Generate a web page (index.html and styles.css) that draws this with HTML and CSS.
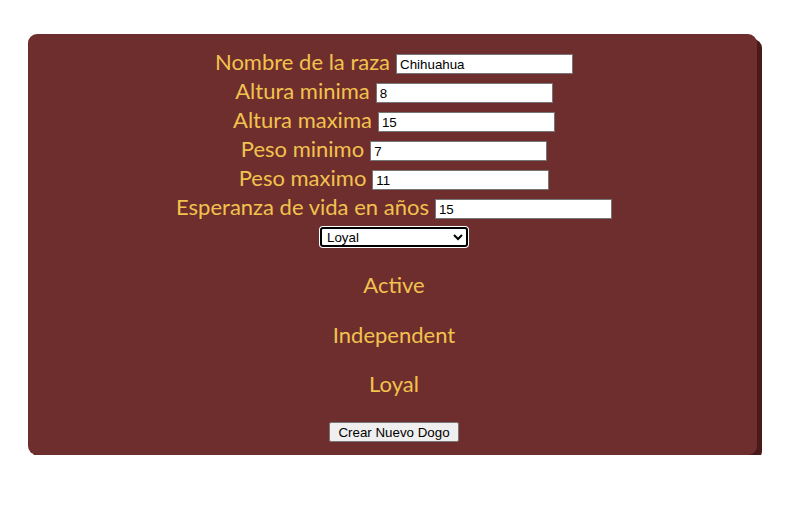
FILE: index.html
```html
<!DOCTYPE html>
<html lang="es">
<head>
<meta charset="utf-8">
<title>Crear Dogo</title>
<link rel="stylesheet" href="styles.css">
</head>
<body>
<form class="card">
  <div class="row"><label class="label">Nombre de la raza</label> <input class="field" type="text" value="Chihuahua"></div>
  <div class="row"><label class="label">Altura minima</label> <input class="field" type="text" value="8"></div>
  <div class="row"><label class="label">Altura maxima</label> <input class="field" type="text" value="15"></div>
  <div class="row"><label class="label">Peso minimo</label> <input class="field" type="text" value="7"></div>
  <div class="row"><label class="label">Peso maximo</label> <input class="field" type="text" value="11"></div>
  <div class="row"><label class="label">Esperanza de vida en años</label> <input class="field" type="text" value="15"></div>
  <div class="select-row">
    <select class="picker">
      <option>Loyal</option>
      <option>Active</option>
      <option>Independent</option>
    </select>
  </div>
  <p class="trait">Active</p>
  <p class="trait">Independent</p>
  <p class="trait">Loyal</p>
  <button class="submit" type="button">Crear Nuevo Dogo</button>
</form>
</body>
</html>
```
FILE: styles.css
```css
html, body {
  margin: 0;
  padding: 0;
  background: #ffffff;
}

body {
  padding: 34px 38px 0 28px;
}

.card {
  display: flex;
  flex-direction: column;
  align-items: center;
  background: #6e2e2d;
  border-radius: 9px;
  box-shadow: 5px 5px 0 #4a1a1a;
  padding: 14px 0 13px 3px;
  height: 421px;
  box-sizing: border-box;
}

.row {
  height: 29px;
  display: flex;
  align-items: center;
  justify-content: center;
  gap: 6px;
}

.label {
  font-family: Lato, "Open Sans", sans-serif;
  font-size: 22px;
  line-height: 29px;
  color: #f2c24f;
  margin-top: -3px;
}

.field {
  width: 177px;
  height: 20px;
  box-sizing: border-box;
  border: 1px solid #767676;
  padding: 1px 3px;
  font-family: "Liberation Sans", Arial, sans-serif;
  font-size: 13.33px;
  color: #000;
  background: #fff;
  margin-top: 3px;
}

.select-row {
  height: 30px;
  display: flex;
  align-items: center;
}

.picker {
  width: 148px;
  height: 20px;
  box-sizing: border-box;
  border: 2px solid #000;
  border-radius: 3px;
  box-shadow: 0 0 0 1px #fff;
  font-family: "Liberation Sans", Arial, sans-serif;
  font-size: 13.33px;
  background: #fff;
  color: #000;
  padding: 0 1px;
}

.trait {
  margin: 0;
  height: 29px;
  line-height: 29px;
  font-family: Lato, "Open Sans", sans-serif;
  font-size: 22px;
  color: #f2c24f;
}

.trait:first-of-type {
  margin-top: 18px;
}

.trait + .trait {
  margin-top: 20.5px;
}

.submit {
  margin-top: 24px;
  height: 20px;
  padding: 1px 8px;
  font-family: "Liberation Sans", Arial, sans-serif;
  font-size: 13.33px;
  color: #000;
  background: #efefef;
  border: 1px solid #767676;
  border-radius: 2px;
}
```
